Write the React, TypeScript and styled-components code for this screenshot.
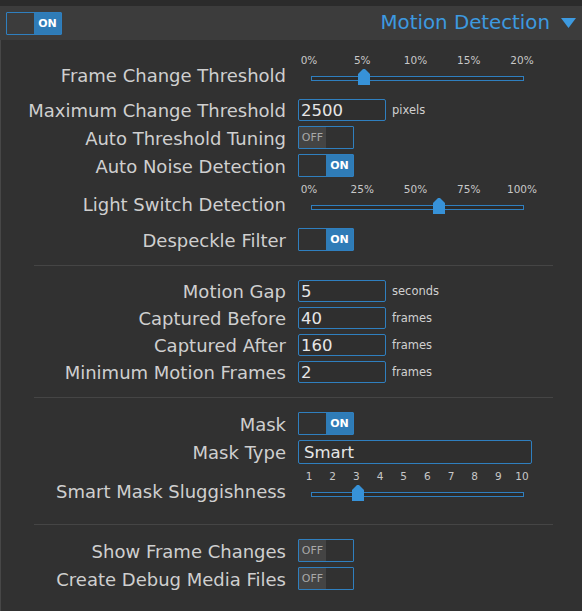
import React from 'react';
import styled, { createGlobalStyle } from 'styled-components';

const Global = createGlobalStyle`
  html, body { margin: 0; padding: 0; background: #313131; }
  body { font-family: "DejaVu Sans", "Noto Sans", sans-serif; }
  * { box-sizing: border-box; }
`;

const Page = styled.div`
  min-height: 100vh;
  display: flex;
  flex-direction: column;
  background: #2b2b2b;
  padding-top: 6px;
`;

const Header = styled.header`
  height: 34px;
  background: #3c3c3c;
  display: flex;
  align-items: center;
  justify-content: space-between;
  padding: 0 6px;
`;

const Title = styled.div`
  display: flex;
  align-items: center;
  gap: 11px;
  color: #3d9ae0;
  font-size: 19.8px;
  line-height: 24px;
`;

const Body = styled.main`
  flex: 1;
  background: #313131;
  border-left: 1px solid #474747;
`;

const Section = styled.section<{ $top?: number }>`
  display: flex;
  flex-direction: column;
  gap: 5px;
  padding: ${(p) => p.$top ?? 14}px 0 14px;
`;

const Divider = styled.hr`
  margin: 0 29px 0 33px;
  border: 0;
  border-top: 1px solid #454545;
  height: 0;
`;

const Row = styled.div<{ $slider?: boolean }>`
  display: grid;
  grid-template-columns: 285px 1fr;
  column-gap: 12px;
  align-items: ${(p) => (p.$slider ? 'end' : 'center')};
  margin-bottom: ${(p) => (p.$slider ? 8 : 0)}px;
`;

const Label = styled.div`
  text-align: right;
  white-space: nowrap;
  font-size: 18px;
  line-height: 21px;
  padding-top: 1px;
  color: #cfcfcf;
`;

const ToggleBox = styled.div`
  width: 56px;
  height: 23px;
  border: 1px solid #2f7fbf;
  border-radius: 1px;
  display: flex;
`;

const ToggleHalf = styled.span<{ $kind: 'off' | 'on' | 'blank'; $left?: boolean }>`
  flex: ${(p) => (p.$left ? '0 0 27px' : '1 1 auto')};
  display: flex;
  align-items: center;
  justify-content: center;
  font-size: 11px;
  font-weight: ${(p) => (p.$kind === 'on' ? 700 : 400)};
  color: ${(p) => (p.$kind === 'on' ? '#ffffff' : '#a8a8a8')};
  background: ${(p) =>
    p.$kind === 'on' ? '#2f7cb7' : p.$kind === 'off' ? '#444444' : 'transparent'};
`;

const Field = styled.div`
  display: flex;
  align-items: center;
  gap: 6px;
`;

const TextInput = styled.input<{ $w: number; $pad?: number }>`
  width: ${(p) => p.$w}px;
  height: ${(p) => (p.$pad ? 24 : 22)}px;
  border: 1px solid #2f7fbf;
  border-radius: 2px;
  background: #2f2f2f;
  color: #e6e6e6;
  font-family: "DejaVu Sans", sans-serif;
  font-size: 16.5px;
  padding: 0 ${(p) => p.$pad ?? 2}px;
  outline: none;
`;

const Unit = styled.span`
  font-size: 11.5px;
  color: #d0d0d0;
`;

const SliderBox = styled.div`
  width: 213px;
  margin-left: 13px;
  display: flex;
  flex-direction: column;
  gap: 2px;
`;

const Ticks = styled.div`
  position: relative;
  height: 14px;
  font-size: 10.5px;
  line-height: 14px;
  color: #c8c8c8;
`;

const Tick = styled.span`
  position: absolute;
  top: 0;
  transform: translateX(calc(-50% - 2px));
  white-space: nowrap;
`;

const TrackArea = styled.div`
  position: relative;
  height: 17px;
`;

const Track = styled.div`
  position: absolute;
  left: 0;
  right: 0;
  top: 7px;
  height: 5px;
  border: 1px solid #2f7fbf;
  background: #2b2b2b;
`;

const Thumb = styled.svg`
  position: absolute;
  top: 0;
  transform: translateX(-50%);
`;

const Toggle = ({ on }: { on: boolean }) => (
  <ToggleBox>
    {on ? (
      <>
        <ToggleHalf $kind="blank" $left />
        <ToggleHalf $kind="on">ON</ToggleHalf>
      </>
    ) : (
      <>
        <ToggleHalf $kind="off" $left>OFF</ToggleHalf>
        <ToggleHalf $kind="blank" />
      </>
    )}
  </ToggleBox>
);

const Slider = ({ ticks, value }: { ticks: string[]; value: number }) => (
  <SliderBox>
    <Ticks>
      {ticks.map((t, i) => (
        <Tick key={t} style={{ left: `${(i / (ticks.length - 1)) * 100}%` }}>
          {t}
        </Tick>
      ))}
    </Ticks>
    <TrackArea>
      <Track />
      <Thumb width="12" height="16" viewBox="0 0 12 16" style={{ left: `${value * 100}%` }}>
        <polygon points="0,5 5,0 7,0 12,5 12,16 0,16" fill="#3792d8" />
      </Thumb>
    </TrackArea>
  </SliderBox>
);

const InputRow = ({ label, value, unit }: { label: string; value: string; unit: string }) => (
  <Row>
    <Label>{label}</Label>
    <Field>
      <TextInput $w={88} value={value} readOnly />
      <Unit>{unit}</Unit>
    </Field>
  </Row>
);

const ToggleRow = ({ label, on }: { label: string; on: boolean }) => (
  <Row>
    <Label>{label}</Label>
    <Toggle on={on} />
  </Row>
);

export default function App() {
  return (
    <>
      <Global />
      <Page>
        <Header>
          <Toggle on />
          <Title>
            Motion Detection
            <svg width="15" height="10" viewBox="0 0 15 10">
              <polygon points="0,0 15,0 7.5,10" fill="#3d9ae0" />
            </svg>
          </Title>
        </Header>
        <Body>
          <Section $top={13}>
            <Row $slider>
              <Label>Frame Change Threshold</Label>
              <Slider ticks={['0%', '5%', '10%', '15%', '20%']} value={0.25} />
            </Row>
            <InputRow label="Maximum Change Threshold" value="2500" unit="pixels" />
            <ToggleRow label="Auto Threshold Tuning" on={false} />
            <ToggleRow label="Auto Noise Detection" on />
            <Row $slider>
              <Label>Light Switch Detection</Label>
              <Slider ticks={['0%', '25%', '50%', '75%', '100%']} value={0.6} />
            </Row>
            <ToggleRow label="Despeckle Filter" on />
          </Section>
          <Divider />
          <Section>
            <InputRow label="Motion Gap" value="5" unit="seconds" />
            <InputRow label="Captured Before" value="40" unit="frames" />
            <InputRow label="Captured After" value="160" unit="frames" />
            <InputRow label="Minimum Motion Frames" value="2" unit="frames" />
          </Section>
          <Divider />
          <Section>
            <ToggleRow label="Mask" on />
            <Row>
              <Label>Mask Type</Label>
              <TextInput $w={234} $pad={5} value="Smart" readOnly />
            </Row>
            <Row $slider>
              <Label>Smart Mask Sluggishness</Label>
              <Slider ticks={['1', '2', '3', '4', '5', '6', '7', '8', '9', '10']} value={2 / 9} />
            </Row>
          </Section>
          <Divider />
          <Section>
            <ToggleRow label="Show Frame Changes" on={false} />
            <ToggleRow label="Create Debug Media Files" on={false} />
          </Section>
        </Body>
      </Page>
    </>
  );
}
